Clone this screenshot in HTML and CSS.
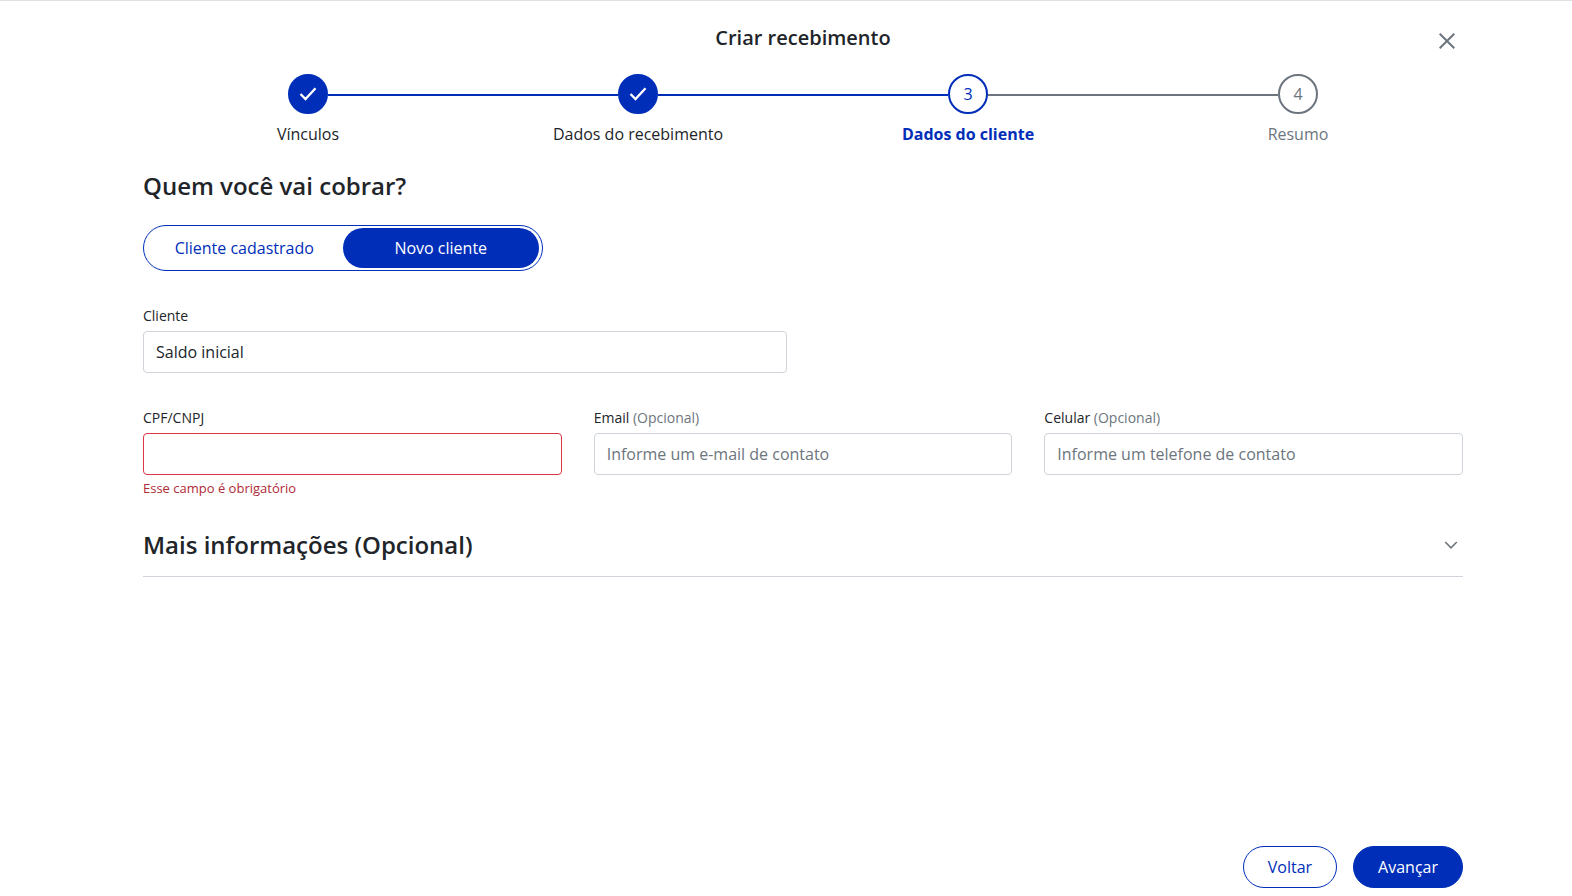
FILE: index.html
```html
<!DOCTYPE html>
<html lang="pt-BR">
<head>
    <meta charset="UTF-8">
    <meta name="viewport" content="width=device-width, initial-scale=1.0">
    <title>Criar recebimento</title>
    <link rel="stylesheet" href="styles.css">
</head>
<body>
    <div class="page">
        <header class="header">
            <h1 class="title">Criar recebimento</h1>
            <button type="button" class="close" aria-label="Fechar">
                <svg width="16" height="16" viewBox="0 0 16 16"><path d="M.7 .7L15.3 15.3M15.3 .7L.7 15.3"/></svg>
            </button>
        </header>

        <ol class="stepper">
            <li class="step done">
                <span class="circle">
                    <svg width="18" height="14" viewBox="0 0 18 14"><path d="M1.5 7L6.5 12L16.5 1.2"/></svg>
                </span>
                <span class="step-label">Vínculos</span>
            </li>
            <li class="step done">
                <span class="circle">
                    <svg width="18" height="14" viewBox="0 0 18 14"><path d="M1.5 7L6.5 12L16.5 1.2"/></svg>
                </span>
                <span class="step-label">Dados do recebimento</span>
            </li>
            <li class="step current">
                <span class="circle">3</span>
                <span class="step-label">Dados do cliente</span>
            </li>
            <li class="step">
                <span class="circle">4</span>
                <span class="step-label">Resumo</span>
            </li>
        </ol>

        <form class="form">
            <h2 class="heading">Quem você vai cobrar?</h2>

            <div class="toggle">
                <button type="button" class="toggle-option">Cliente cadastrado</button>
                <button type="button" class="toggle-option active">Novo cliente</button>
            </div>

            <div class="row row-half">
                <div class="field">
                    <label for="cliente">Cliente</label>
                    <input type="text" id="cliente" value="Saldo inicial">
                </div>
            </div>

            <div class="row row-third">
                <div class="field">
                    <label for="documento">CPF/CNPJ</label>
                    <input type="text" id="documento" class="invalid">
                    <p class="error">Esse campo é obrigatório</p>
                </div>
                <div class="field">
                    <label for="email">Email <span class="optional">(Opcional)</span></label>
                    <input type="email" id="email" placeholder="Informe um e-mail de contato">
                </div>
                <div class="field">
                    <label for="celular">Celular <span class="optional">(Opcional)</span></label>
                    <input type="tel" id="celular" placeholder="Informe um telefone de contato">
                </div>
            </div>

            <button type="button" class="accordion">
                <span class="heading">Mais informações (Opcional)</span>
                <svg width="14" height="8" viewBox="0 0 14 8"><path d="M1.2 1L7 6.8L12.8 1"/></svg>
            </button>
        </form>

        <footer class="footer">
            <button type="button" class="btn btn-outline">Voltar</button>
            <button type="button" class="btn btn-primary">Avançar</button>
        </footer>
    </div>
</body>
</html>
```
FILE: styles.css
```css
* {
    margin: 0;
    padding: 0;
    box-sizing: border-box;
}

body {
    padding-left: 34px;
    border-top: 1px solid #dee2e6;
    background: #fff;
    color: #212529;
    font-family: "Open Sans", "Noto Sans", sans-serif;
    font-size: 16px;
    line-height: 24px;
}

button,
input {
    font: inherit;
    color: inherit;
}

button {
    border: none;
    background: none;
    cursor: pointer;
}

svg {
    display: block;
    fill: none;
    stroke: #6c757d;
    stroke-width: 2;
}

.page {
    display: flex;
    flex-direction: column;
    max-width: 1320px;
    min-height: calc(100vh - 1px);
    margin: 0 auto;
    padding: 24px 0 8px;
}

.header {
    display: grid;
    grid-template-columns: 32px 1fr 32px;
    align-items: center;
    height: 32px;
}

.title {
    grid-column: 2;
    padding-bottom: 6px;
    font-size: 20px;
    font-weight: 600;
    line-height: 24px;
    text-align: center;
}

.close {
    display: flex;
    width: 32px;
    height: 32px;
    align-items: center;
    justify-content: center;
}

/* steps */

.stepper {
    display: flex;
    margin-top: 17px;
    list-style: none;
}

.step {
    position: relative;
    display: flex;
    flex: 1;
    flex-direction: column;
    align-items: center;
    gap: 8px;
    color: #6c757d;
}

/* line that joins a step to the next one */
.step:not(:last-child)::after {
    content: "";
    position: absolute;
    top: 20px;
    left: calc(50% + 20px);
    width: calc(100% - 40px);
    height: 2px;
    background: #6c757d;
}

.step.done:not(:last-child)::after {
    background: #002eb9;
}

.circle {
    display: flex;
    width: 40px;
    height: 40px;
    align-items: center;
    justify-content: center;
    border: 2px solid #6c757d;
    border-radius: 50%;
}

.done {
    color: #212529;
}

.done .circle {
    border-color: #002eb9;
    background: #002eb9;
}

.done svg {
    stroke: #fff;
    stroke-width: 2.3;
}

.current {
    color: #002eb9;
}

.current .circle {
    border-color: #002eb9;
}

.current .step-label {
    font-weight: 700;
}

/* form */

.form {
    flex: 1;
    margin-top: 24px;
}

.heading {
    font-size: 24px;
    font-weight: 600;
    line-height: 32px;
}

.toggle {
    display: flex;
    width: 400px;
    max-width: 100%;
    margin-top: 23px;
    padding: 2px 3px 2px 2px;
    border: 1px solid #002eb9;
    border-radius: 23px;
}

.toggle-option {
    flex: 1;
    height: 40px;
    border-radius: 20px;
    color: #002eb9;
}

.toggle-option.active {
    background: #002eb9;
    color: #fff;
}

.row {
    display: grid;
    gap: 32px;
    margin-top: 34px;
}

.row-half {
    grid-template-columns: repeat(2, 1fr);
}

.row-third {
    grid-template-columns: repeat(3, 1fr);
}

.field label {
    display: block;
    margin-bottom: 4px;
    font-size: 14px;
    line-height: 22px;
}

.optional {
    color: #6c757d;
}

.field input {
    display: block;
    width: 100%;
    height: 42px;
    padding: 0 12px;
    border: 1px solid #ced4da;
    border-radius: 4px;
    background: #fff;
}

.field input::placeholder {
    color: #6c757d;
    opacity: 1;
}

.field input.invalid {
    border-color: #dc3545;
}

.error {
    margin-top: 3px;
    color: #b02a37;
    font-size: 13px;
    line-height: 20px;
}

.accordion {
    display: flex;
    width: 100%;
    align-items: center;
    justify-content: space-between;
    margin-top: 31px;
    padding: 0 5px 15px 0;
    border-bottom: 1px solid #ced4da;
    text-align: left;
}

.accordion svg {
    stroke-width: 1.6;
}

/* actions */

.footer {
    display: flex;
    justify-content: flex-end;
    gap: 16px;
}

.btn {
    height: 42px;
    padding: 0 24px;
    border: 1px solid #002eb9;
    border-radius: 21px;
}

.btn-outline {
    color: #002eb9;
}

.btn-primary {
    background: #002eb9;
    color: #fff;
}
```
